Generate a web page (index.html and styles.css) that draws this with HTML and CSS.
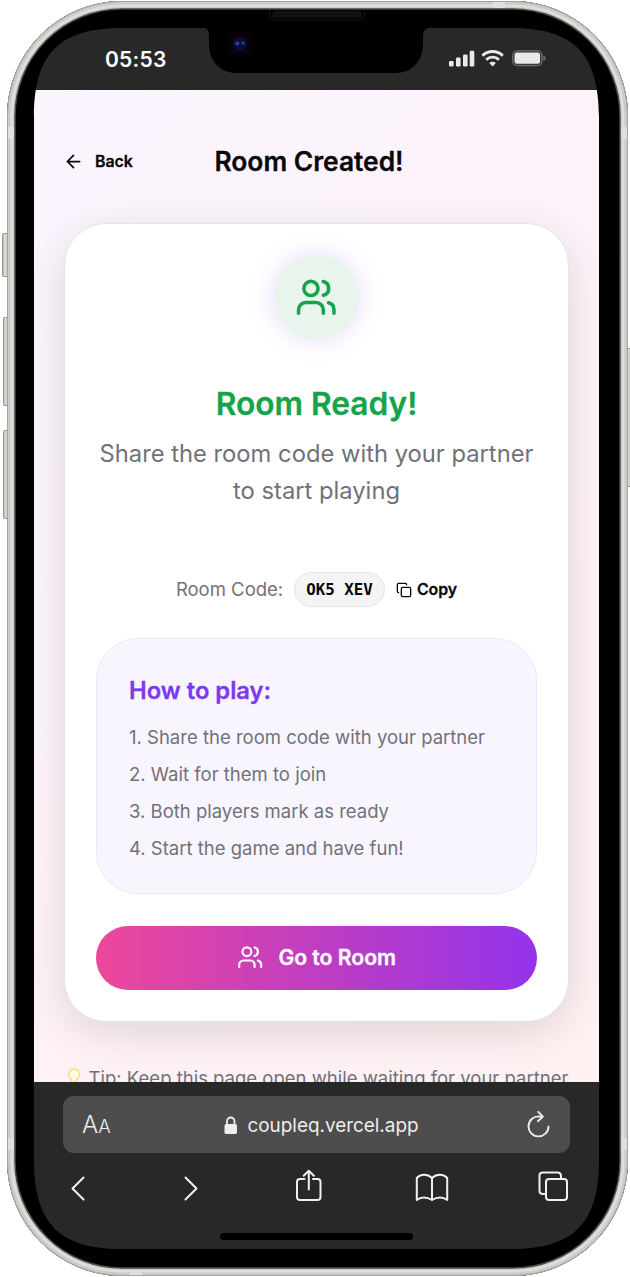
FILE: index.html
```html
<!DOCTYPE html>
<html lang="en">
<head>
<meta charset="utf-8">
<title>Room Created!</title>
<link rel="stylesheet" href="styles.css">
</head>
<body>
<div class="phone">
  <div class="screen">
    <div class="status">
      <span class="time">05:53</span>
      <svg class="status-icons" width="98" height="18" viewBox="0 0 98 18" fill="#e9e9e9">
        <rect x="1" y="12" width="4.6" height="5.500" rx="1.3"/><rect x="8" y="8.500" width="4.6" height="9" rx="1.3"/><rect x="15" y="5.500" width="4.6" height="12" rx="1.3"/><rect x="21.7" y="1.8" width="4.6" height="15.7" rx="1.3"/>
        <g fill="none" stroke="#e9e9e9" stroke-width="2.9"><path d="M34.4 6.7a14.500 14.500 0 0 1 20.400 0"/><path d="M38.2 10.700a9.3 9.3 0 0 1 12.800 0"/></g>
        <path d="M41.300 14a4.700 4.700 0 0 1 6.600 0l-3.300 3.400z"/>
        <rect x="64.800" y="1.900" width="29" height="14.600" rx="4.300" fill="none" stroke="#6d6a6d" stroke-width="1.400"/><rect x="66.500" y="3.600" width="25.600" height="11.200" rx="2.300"/><path d="M95.300 6.500q2.500 1 2.500 2.700t-2.500 2.700z" fill="#6d6a6d"/>
      </svg>
    </div>
    <main class="page">
      <header class="header">
        <button class="back"><svg width="21" height="21" viewBox="0 0 24 24"><path d="m12 19-7-7 7-7M19 12H5"/></svg><span>Back</span></button>
        <h1>Room Created!</h1>
      </header>
      <section class="card">
        <div class="badge"><svg width="42.500" height="42.500" viewBox="0 0 24 24"><path d="M16 21v-2a4 4 0 0 0-4-4H6a4 4 0 0 0-4 4v2"/><circle cx="9" cy="7" r="4"/><path d="M22 21v-2a4 4 0 0 0-3-3.870M16 3.130a4 4 0 0 1 0 7.750"/></svg></div>
        <h2>Room Ready!</h2>
        <p class="lead">Share the room code with your partner<br>to start playing</p>
        <div class="code-row">
          <span class="label">Room Code:</span>
          <span class="code">OK5 XEV</span>
          <button class="copy"><svg width="16" height="16" viewBox="0 0 24 24"><rect x="8" y="8" width="14" height="14" rx="2"/><path d="M4 16c-1.100 0-2-.9-2-2V4c0-1.100.9-2 2-2h10c1.100 0 2 .9 2 2"/></svg><span>Copy</span></button>
        </div>
        <div class="howto">
          <h3>How to play:</h3>
          <p>1. Share the room code with your partner</p>
          <p>2. Wait for them to join</p>
          <p>3. Both players mark as ready</p>
          <p>4. Start the game and have fun!</p>
        </div>
        <button class="go"><svg width="26.400" height="26.400" viewBox="0 0 24 24"><path d="M16 21v-2a4 4 0 0 0-4-4H6a4 4 0 0 0-4 4v2"/><circle cx="9" cy="7" r="4"/><path d="M22 21v-2a4 4 0 0 0-3-3.870M16 3.130a4 4 0 0 1 0 7.750"/></svg><span>Go to Room</span></button>
      </section>
      <p class="tip"><svg width="14" height="20" viewBox="0 0 14 20"><path d="M7 1.200a5.300 5.300 0 0 0-3.300 9.500c.8.800 1 1.700 1.100 3.300h4.400c.1-1.600.3-2.500 1.100-3.300A5.300 5.300 0 0 0 7 1.200z" fill="#fffbe2" stroke="#f6e08b" stroke-width="1.700"/><path d="M5 15h4v3H5z" fill="#b9b6ae"/></svg><span>Tip: Keep this page open while waiting for your partner</span></p>
    </main>
    <footer class="browser">
      <div class="address">
        <span class="aa">A<small>A</small></span>
        <span class="url"><svg width="14" height="19" viewBox="0 0 14 19"><rect x=".5" y="8" width="12.500" height="10" rx="1.800" fill="#ededed"/><path d="M3 9V5.500a3.750 4 0 0 1 7.500 0V9" fill="none" stroke="#ededed" stroke-width="1.800"/></svg><span>coupleq.vercel.app</span></span>
        <svg class="reload" width="26" height="28" viewBox="0 0 26 28"><path d="M14.500 5.400A10 10 0 1 0 23.500 15.400M13.300 .9l4.600 4.700-5 4.600M17.700 5.600H14"/></svg>
      </div>
      <nav class="toolbar">
        <svg width="34" height="34" viewBox="0 0 34 34"><path d="M13.500 8.500 2.500 19.500l11 11"/></svg>
        <svg width="34" height="34" viewBox="0 0 34 34"><path d="m1.500 8.500 11 11-11 11"/></svg>
        <svg width="34" height="34" viewBox="0 0 34 34"><path d="M9.500 10H5Q2 10 2 13v15.300Q2 31 5 31h17.500q3 0 3-2.700V13q0-3-3-3H18M13.800 20.500V1.800M8.700 6.700l5.100-5 5.100 5"/></svg>
        <svg width="34" height="34" viewBox="0 0 34 34"><path d="M17 9Q13.500 5.800 9 5.800T1.800 9v22Q5 28.500 9 28.500t8 2.500q4-2.500 8-2.500t7.200 2.500V9Q29.500 5.800 25 5.800T17 9zv22"/></svg>
        <svg width="34" height="34" viewBox="0 0 34 34"><rect x="9" y="10" width="21" height="21" rx="3"/><path d="M8 25H6q-3.500 0-3.500-3.500v-15Q2.500 3.500 6 3.500h14.500Q24 3.500 24 7v2"/></svg>
      </nav>
      <div class="home"></div>
    </footer>
  </div>
  <svg class="frame" width="630" height="1277" viewBox="0 0 630 1277">
    <defs>
      <linearGradient id="key"><stop stop-color="#8f8f8c"/><stop offset=".3" stop-color="#dededb"/><stop offset="1" stop-color="#c1c1be"/></linearGradient>
      <clipPath id="shell"><path clip-rule="evenodd" d="M122 1H513A115 115 0 0 1 628 116V1161A115 115 0 0 1 513 1276H122A115 115 0 0 1 7 1161V116A115 115 0 0 1 122 1zM34 117C34 54 59 28 122 28H511C574 28 599 54 599 117V1160C599 1223 574 1249 511 1249H122C59 1249 34 1223 34 1160z"/></clipPath>
    </defs>
    <g fill="url(#key)" stroke="#969693" stroke-width="1"><rect x="2.500" y="233.500" width="6" height="43" rx="1"/><rect x="3.500" y="317.500" width="5" height="88" rx="1"/><rect x="3.500" y="430.500" width="5" height="88" rx="1"/><rect x="626.500" y="348.500" width="5" height="138" rx="1"/></g>
    <g clip-path="url(#shell)">
      <rect width="630" height="1277" fill="#000"/>
      <g fill="none">
        <rect x="11" y="5" width="613" height="1267" rx="111" stroke="#4a4a48" stroke-width="9.500"/>
        <rect x="10.500" y="4.500" width="614" height="1268" rx="111.500" stroke="#cbcbc7" stroke-width="7.500"/>
        <rect x="11.800" y="5.800" width="611.400" height="1265.400" rx="110" stroke="#dededa" stroke-width="2.500"/>
        <rect x="7.500" y="1.500" width="620" height="1274" rx="114.500" stroke="#a3a3a0"/>
      </g>
      <path d="M8 127h6v12H8zm613 0h6v12h-6zM8 1138h6v12H8zm613 0h6v12h-6zM493 2h12v6h-12zM130 1270h12v5h-12z" fill="#dfdfdc"/>
    </g>
    <path d="M203 27.500q6 .5 6 8V44c0 18 12 29 28 29h158c16 0 28-11 28-29v-8q0-7.500 7-8.500z"/>
    <path d="M269.500 10v6q0 4 4 4h87q4 0 4-4v-6" fill="none" stroke="#151515" stroke-width="1"/><rect x="272" y="11" width="90" height="7" rx="3.500" fill="#111"/>
    <circle cx="240" cy="43.500" r="13" fill="#08030a"/><circle cx="240" cy="43.500" r="7" fill="#0b0c36"/><circle cx="237.300" cy="43.500" r="2" fill="#303d94"/><circle cx="243" cy="43" r="1.700" fill="#2b378b"/>
  </svg>
</div>
</body>
</html>
```
FILE: styles.css
```css
* { box-sizing: border-box; }
body { margin: 0; background: #fff; font-family: Inter, sans-serif; color: #09090b; }
h1, h2, h3, p { margin: 0; }
button { border: 0; padding: 0; background: none; font: inherit; color: inherit; display: flex; align-items: center; }
svg { flex: none; display: block; }
.phone { position: relative; width: 630px; height: 1277px; padding: 28px 31px 28px 34px; overflow: hidden; }
.frame { position: absolute; inset: 0; pointer-events: none; }
.screen { height: 1221px; display: flex; flex-direction: column; border-radius: 54px; overflow: hidden; background: #282828; }
.status { height: 62px; flex: none; display: flex; justify-content: space-between; padding: 18px 53px 0 71px; }
.time { color: #fff; font-size: 21px; line-height: 27px; font-weight: 600; letter-spacing: .25px; }
.status-icons { margin-top: 3px; }
.page { height: 992px; flex: none; overflow: hidden; padding: 48px 30px 0; background: linear-gradient(135deg, #faf5ff 0%, #fdf2f8 50%, #fff1f2 100%); }
.header { display: grid; grid-template-columns: 1fr auto 1fr; align-items: center; height: 48px; }
.back { font-size: 15.84px; font-weight: 600; gap: 11px; margin: 0 0 2px -1px; }
.back svg, .copy svg { fill: none; stroke: currentColor; stroke-width: 2; stroke-linecap: round; stroke-linejoin: round; }
h1, h2, h3, .back span, .copy span, .go span { -webkit-text-stroke: .3px currentColor; }
h1 { font-size: 26.4px; line-height: 37px; font-weight: 600; letter-spacing: -.02px; margin: -1px 0 0 -15px; }
.card { height: 799px; margin-top: 37px; padding: 31px; border: 1px solid #e4e4e7; border-radius: 42px; background: #fff; box-shadow: 0 11px 42px rgba(0,0,0,.12); display: flex; flex-direction: column; align-items: center; }
.badge { width: 85px; height: 85px; flex: none; border-radius: 50%; display: grid; place-items: center; background: #e9f4ec; color: #16a34a; box-shadow: 0 0 26px rgba(124,58,237,.18); }
.badge svg, .go svg { fill: none; stroke: currentColor; stroke-width: 2; stroke-linecap: round; stroke-linejoin: round; }
h2 { margin-top: 43px; font-size: 31.700px; line-height: 42px; font-weight: 600; color: #16a34a; }
.lead { margin-top: 10px; font-size: 23.760px; line-height: 37px; color: #71717a; text-align: center; white-space: nowrap; }
.code-row { margin-top: 63px; height: 35px; display: flex; align-items: center; }
.label { font-size: 18.500px; line-height: 24px; margin-bottom: 1px; color: #71717a; }
.code { margin: 0 11px; height: 35px; padding: 0 11px; border: 1px solid #e4e4e7; border-radius: 18px; background: #f4f4f5; font: bold 15.840px/33px "DejaVu Sans Mono", monospace; white-space: pre; }
.copy { font-size: 15.840px; font-weight: 600; gap: 5px; }
.howto { align-self: stretch; height: 256px; margin-top: 31px; padding: 33px 32px 31px; border: 1px solid #ede5ff; border-radius: 42px; background: #f8f5ff; }
h3 { font-size: 23.760px; line-height: 37px; font-weight: 600; color: #7c3aed; margin-bottom: 10px; }
.howto p { font-size: 18.500px; line-height: 37px; color: #71717a; white-space: nowrap; }
.go { align-self: stretch; height: 64px; margin-top: 32px; padding-bottom: 1px; border-radius: 32px; justify-content: center; gap: 15px; color: #fff; font-size: 21.120px; font-weight: 600; background: linear-gradient(90deg, #ec4899, #9333ea); }
.tip { margin: 43px 0 0 2px; height: 26px; display: flex; justify-content: center; gap: 8px; font-size: 18.500px; line-height: 26px; color: #71717a; white-space: nowrap; }
.tip svg { margin-top: 3px; }
.browser { flex: 1; padding: 14px 29px 0; background: #282828; color: #ededed; }
.address { height: 57px; border-radius: 11px; background: #4d4d4d; display: grid; grid-template-columns: 1fr auto 1fr; align-items: center; padding: 0 19px; }
.aa { font-size: 24px; font-weight: 300; }
.aa small { font-size: 18.500px; }
.url { display: flex; align-items: center; gap: 9px; font-size: 18.900px; margin: 2px 0 0 10px; }
.reload { justify-self: end; fill: none; stroke: #ededed; stroke-width: 1.900; stroke-linecap: round; stroke-linejoin: round; }
.toolbar { display: grid; grid-template-columns: 114px 111px 120px 122px 34px; margin: 16px 0 0 7px; }
.toolbar svg { fill: none; stroke: #f0f0f0; stroke-width: 2; stroke-linecap: round; stroke-linejoin: round; }
.home { width: 193px; height: 7px; margin: 30px 0 0 157px; border-radius: 4px; background: #000; }
```
